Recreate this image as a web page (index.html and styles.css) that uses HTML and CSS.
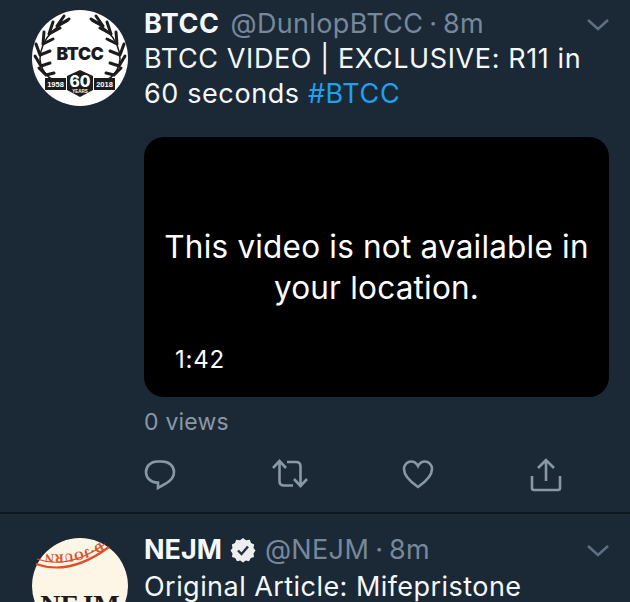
FILE: index.html
```html
<!DOCTYPE html>
<html lang="en">
<head>
<meta charset="utf-8">
<title>Timeline</title>
<link rel="stylesheet" href="styles.css">
</head>
<body>
<main class="timeline">
  <article class="tweet tweet-first">
    <svg class="avatar" viewBox="0 0 96 96">
      <circle cx="48" cy="48" r="48" fill="#fff"/>
      <g id="laurel" class="laurel">
        <path class="stem" d="M36 11 Q18 19 11 35 Q5 50 11 60 Q16 68 24 72"/>
        <path d="M25 16 L37 9 M25 16 L32 6 M17 24 L28 18 M17 24 L21 12 M11 34 L21 29 M11 34 L12 22 M8 45 L18 41 M8 45 L4 34 M9 56 L18 53 M9 56 L3 46 M14 65 L22 63 M14 65 L7 58"/>
      </g>
      <use href="#laurel" transform="translate(96 0) scale(-1 1)"/>
      <text class="logo-main" x="48" y="50" text-anchor="middle">BTCC</text>
      <rect x="13" y="68" width="21" height="12" fill="#1c1c1c"/>
      <rect x="62" y="68" width="21" height="12" fill="#1c1c1c"/>
      <path d="M48 60 L61 66 L61 80 L48 87 L35 80 L35 66 Z" fill="#1c1c1c"/>
      <text class="logo-year" x="23.500" y="76.500" text-anchor="middle">1958</text>
      <text class="logo-year" x="72.500" y="76.500" text-anchor="middle">2018</text>
      <text class="logo-sixty" x="48" y="76.500" text-anchor="middle">60</text>
      <text class="logo-tiny" x="48" y="82.500" text-anchor="middle">YEARS</text>
    </svg>
    <div class="body">
      <header class="head">
        <strong class="name">BTCC</strong>
        <span class="handle">@DunlopBTCC</span>
        <span class="dot">·</span>
        <span class="handle">8m</span>
        <svg class="chevron" viewBox="0 0 24 14"><path d="M2 2 L12 11 L22 2"/></svg>
      </header>
      <p class="text">BTCC VIDEO | EXCLUSIVE: R11 in<br>60 seconds <span class="tag">#BTCC</span></p>
      <div class="video">
        <p class="video-msg">This video is not available in<br>your location.</p>
        <span class="duration">1:42</span>
      </div>
      <p class="views">0 views</p>
      <div class="actions">
        <svg class="icon" viewBox="0 0 32 32"><path d="M13 3.500 H18 C25 3.500 30 8 30 14 C30 19 27 22.500 22 25.500 L14 30 V24.500 H13 C7 24.500 2 20 2 14 C2 8 7 3.500 13 3.500 Z"/></svg>
        <svg class="icon icon-rt" viewBox="0 0 38 32"><path d="M2 10 L8.500 3 L15 10 M8.500 3.500 V23 Q8.500 27.500 13 27.500 H22 M16 4 H25 Q29.500 4 29.500 8.500 V28 M23 21 L29.500 28 L36 21"/></svg>
        <svg class="icon icon-heart" viewBox="0 0 32 30"><path d="M16 28 C8 22.500 2 17 2 10 C2 5.500 5.500 2.500 9 2.500 C12 2.500 14.500 4 16 7 C17.500 4 20 2.500 23 2.500 C26.500 2.500 30 5.500 30 10 C30 17 24 22.500 16 28 Z"/></svg>
        <svg class="icon icon-share" viewBox="0 0 32 34"><path d="M8 10 L16 2 L24 10 M16 2.500 V23 M2 18 V30 Q2 32 4 32 H28 Q30 32 30 30 V18"/></svg>
      </div>
    </div>
  </article>
  <article class="tweet tweet-second">
    <svg class="avatar" viewBox="0 0 96 96">
      <circle cx="48" cy="48" r="48" fill="#fdf6e6"/>
      <path class="seal-line" d="M4 26 Q38 38 77 9"/>
      <path class="seal-line seal-thin" d="M5 21 Q36 32 73 6"/>
      <path id="seal-arc" class="seal-none" d="M69 4 Q44 20 10 15"/>
      <text class="seal-text"><textPath href="#seal-arc">D·JOURN</textPath></text>
      <text class="seal-name" x="48" y="76" text-anchor="middle">NEJM</text>
    </svg>
    <div class="body body-second">
      <header class="head">
        <strong class="name name-second">NEJM</strong>
        <svg class="badge" viewBox="0 0 26 26"><path d="M13 1 L16 3.200 L19.800 2.800 L21 6 L24.200 7.500 L23.500 11 L25.500 13.500 L23.500 16.500 L24 20 L20.800 21 L19 24.200 L15.800 23.500 L13 25.500 L10.200 23.500 L7 24.200 L5.200 21 L2 20 L2.500 16.500 L0.500 13.500 L2.500 11 L1.800 7.500 L5 6 L6.200 2.800 L10 3.200 Z" fill="#eceef0"/><path d="M8 13.500 L11.500 17 L18 9.500" fill="none" stroke="#26323e" stroke-width="2.400"/></svg>
        <span class="handle">@NEJM</span>
        <span class="dot">·</span>
        <span class="handle">8m</span>
        <svg class="chevron" viewBox="0 0 24 14"><path d="M2 2 L12 11 L22 2"/></svg>
      </header>
      <p class="text text-second">Original Article: Mifepristone</p>
    </div>
  </article>
</main>
</body>
</html>
```

FILE: styles.css
```css
* { box-sizing: border-box; }
html, body { margin: 0; height: 602px; overflow: hidden; background: #1b2836; }
body { font-family: "Inter", "Liberation Sans", sans-serif; color: #fff; }
.timeline { display: flex; flex-direction: column; }
.tweet { display: flex; padding: 0 20px 0 32px; gap: 16px; }
.tweet-first { height: 514px; padding-top: 10px; border-bottom: 2px solid #10171e; }
.tweet-second { height: 88px; padding-top: 24px; overflow: hidden; }
.avatar { width: 96px; height: 96px; flex: none; }
.body { flex: 1; min-width: 0; display: flex; flex-direction: column; }
.body-second { margin-top: -2px; }
.head { display: flex; align-items: center; height: 26px; margin-top: 1px; font-size: 27px; line-height: 26px; letter-spacing: 0.35px; }
.name { font-weight: 700; margin-right: 11px; color: #f5f8fa; letter-spacing: 0.5px; }
.name-second { margin-right: 8px; letter-spacing: 0; }
.handle { color: #76889a; }
.dot { color: #76889a; margin: 0 6px; letter-spacing: 0; }
.chevron { width: 24px; height: 14px; margin-left: auto; margin-top: 1px; fill: none; stroke: #5d7082; stroke-width: 2.500px; }
.text { margin: 4px 0 0; font-size: 27px; line-height: 35px; letter-spacing: 0.6px; color: #f5f8fa; }
.text-second { margin-top: 6px; letter-spacing: 0.45px; }
.tag { color: #1da1f2; }
.video { margin-top: 26px; height: 260px; width: 465px; background: #000; border-radius: 20px; display: flex; flex-direction: column; align-items: center; position: relative; }
.video-msg { margin: 89px 0 0; text-align: center; font-size: 31.500px; line-height: 41px; letter-spacing: 0.2px; }
.duration { position: absolute; left: 31px; top: 209px; font-size: 24px; line-height: 28px; letter-spacing: 0.8px; }
.views { margin: 12px 0 0; font-size: 23px; line-height: 27px; letter-spacing: 0.2px; color: #8899a6; }
.actions { margin-top: 22px; display: flex; }
.icon { width: 32px; height: 32px; fill: none; stroke: #8899a6; stroke-width: 2.600px; flex: none; }
.icon-rt { width: 38px; margin-left: 95px; }
.icon-heart { margin-left: 93px; }
.icon-share { margin-left: 96px; height: 34px; }
.badge { width: 26px; height: 26px; margin-right: 9px; }
.laurel { fill: none; stroke: #1c1c1c; stroke-width: 3px; stroke-linecap: round; }
.stem { stroke-width: 1.500px; }
.logo-main { font: 900 17.500px "Inter", sans-serif; fill: #1c1c1c; letter-spacing: -0.3px; }
.logo-year { font: 700 7.500px "Liberation Sans", sans-serif; fill: #fff; }
.logo-sixty { font: 800 15.500px "Inter", sans-serif; fill: #fff; }
.logo-tiny { font: 700 4.500px "Liberation Sans", sans-serif; fill: #fff; }
.seal-line { fill: none; stroke: #d9502a; stroke-width: 2.200px; }
.seal-thin { stroke-width: 1.200px; }
.seal-none { fill: none; stroke: none; }
.seal-text { font: 700 12.500px "Liberation Serif", serif; fill: #d9502a; letter-spacing: 0.3px; }
.seal-name { font: 700 28px "Liberation Serif", serif; fill: #1b1b1b; }
```
